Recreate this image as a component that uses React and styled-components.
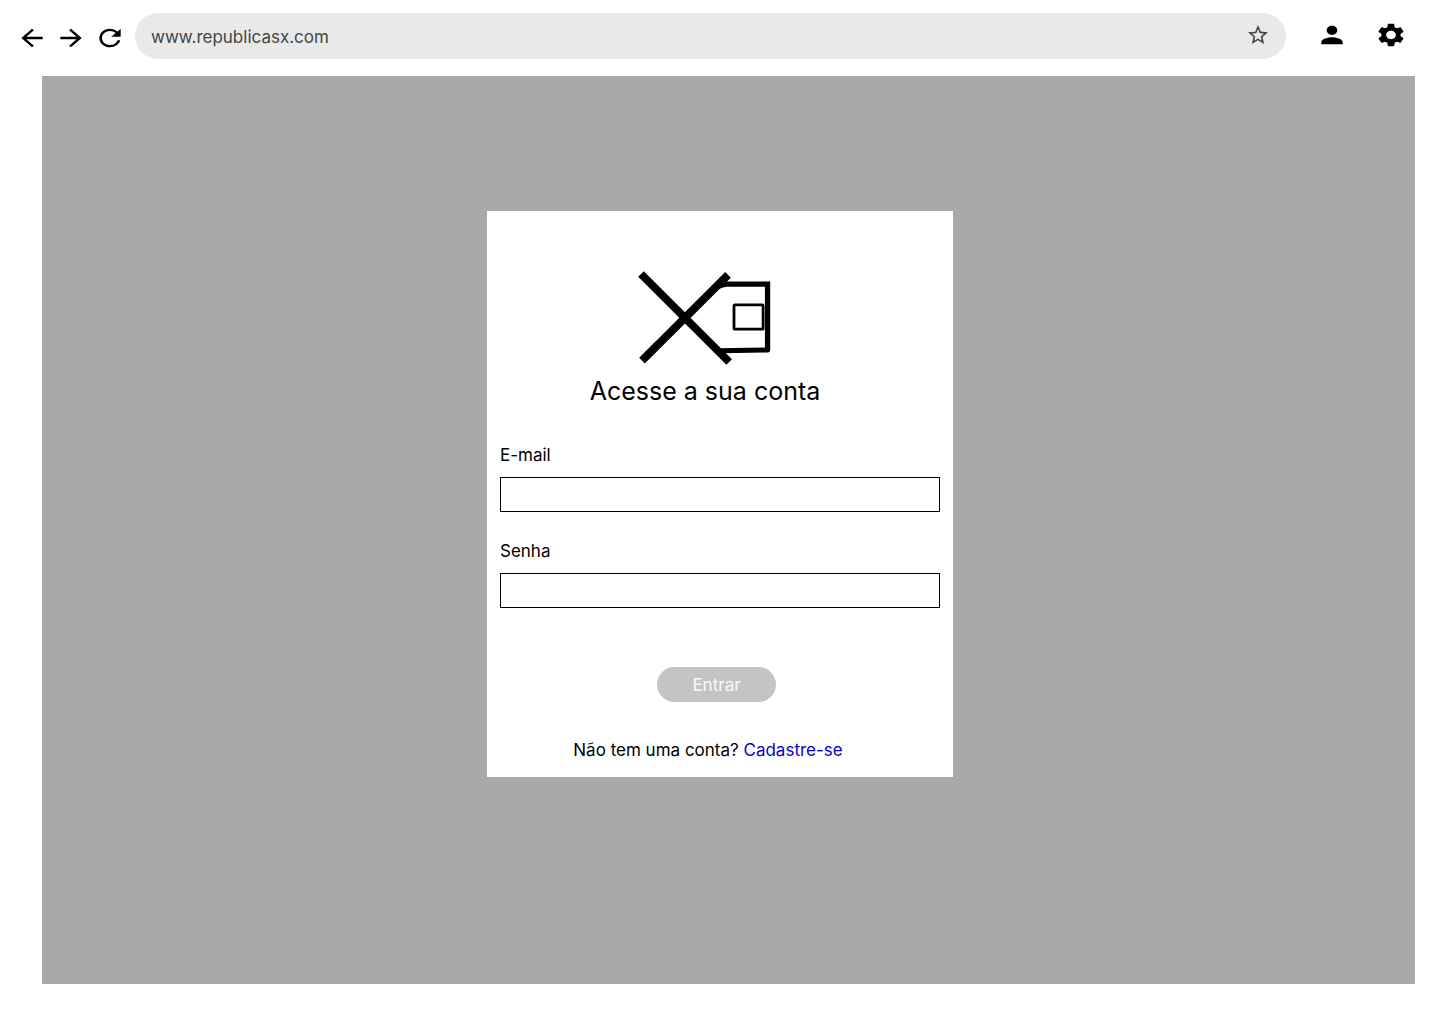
import React, { useState } from "react";
import styled, { createGlobalStyle } from "styled-components";
import {
  MdArrowBack,
  MdArrowForward,
  MdPerson,
  MdRefresh,
  MdSettings,
  MdStarBorder,
} from "react-icons/md";

const GlobalStyle = createGlobalStyle`
  *, *::before, *::after { box-sizing: border-box; }
  body {
    margin: 0;
    background: #fff;
    color: #000;
    font-family: Inter, "Liberation Sans", sans-serif;
    font-size: 17px;
    line-height: 22px;
  }
`;

const Toolbar = styled.header`
  display: flex;
  align-items: center;
  height: 76px;
  padding: 0 33px 4px 16px;
`;

const ButtonGroup = styled.div`
  display: flex;
  gap: ${(p) => p.$gap}px;
  padding: ${(p) => p.$drop || 0}px 0 ${(p) => p.$lift || 0}px;
`;

const IconButton = styled.button`
  display: flex;
  padding: 0;
  border: 0;
  background: none;
  color: ${(p) => p.$color || "#000"};
  cursor: pointer;

  svg {
    width: ${(p) => p.$width || 32}px;
    height: ${(p) => p.$height || 28}px;
  }
`;

const AddressBar = styled.div`
  display: flex;
  flex: 1;
  align-items: center;
  height: 46px;
  margin: 0 30px 0 9px;
  padding: 0 16px 2px;
  border-radius: 23px;
  background: #e9e9e9;
`;

const AddressInput = styled.input`
  flex: 1;
  min-width: 0;
  padding: 4px 0 0;
  border: 0;
  outline: 0;
  background: none;
  color: #444;
  font: inherit;
`;

const Page = styled.main`
  display: flex;
  align-items: flex-start;
  justify-content: center;
  min-height: calc(100vh - 116px);
  margin: 0 25px 40px 42px;
  padding: 135px 17px 40px 0;
  background: #a9a9a9;
`;

const Card = styled.section`
  width: 100%;
  max-width: 466px;
  padding: 60px 13px 16px;
  background: #fff;
`;

const Brand = styled.div`
  display: flex;
  flex-direction: column;
  align-items: center;
  gap: 10px;
  padding-right: 30px;
`;

const Title = styled.h1`
  margin: 0;
  font-size: 25px;
  font-weight: 400;
  line-height: 32px;
`;

const Form = styled.form`
  display: flex;
  flex-direction: column;
  gap: 28px;
  margin-top: 37px;
`;

const Field = styled.div`
  display: flex;
  flex-direction: column;
  gap: 11px;
`;

const TextInput = styled.input`
  width: 100%;
  height: 35px;
  padding: 0 8px;
  border: 1px solid #000;
  border-radius: 0;
  background: #fff;
  font: inherit;
`;

const Actions = styled.div`
  display: flex;
  justify-content: center;
  padding: 31px 7px 0 0;
`;

const SubmitButton = styled.button`
  width: 119px;
  height: 35px;
  padding: 0;
  border: 0;
  border-radius: 18px;
  background: #c4c4c4;
  color: #fff8f8;
  font: inherit;
  cursor: pointer;
`;

const SignUp = styled.p`
  margin: 37px 0 0;
  padding-right: 24px;
  text-align: center;
`;

const SignUpLink = styled.a`
  color: #0500d0;
  text-decoration: none;
`;

const LogoImage = styled.svg`
  overflow: visible;
`;

function Logo() {
  return (
    <LogoImage width="132" height="94" viewBox="0 0 132 94" role="img" aria-label="República SX">
      <g fill="none" stroke="#000">
        <path d="M2 3 90.200 91" strokeWidth="8" />
        <path d="M3 89.700 89 3.800" strokeWidth="8" />
        <path
          d="M95.9 33.9H123.4Q124.1 33.9 124.1 34.6V57.4Q124.1 58.2 123.4 58.2H95.9Q95 58.2 95 57.4V34.6Q95 33.9 95.9 33.9Z"
          strokeWidth="2.8"
        />
      </g>
      <path d="M72 24Q80 16 88 15.700H125.900V76.600L80 77.200 84 82.300 129 81.400Q131.200 81.200 131.200 79V10.400H86Z" />
    </LogoImage>
  );
}

function TextField({ id, label, type, value, onChange }) {
  return (
    <Field>
      <label htmlFor={id}>{label}</label>
      <TextInput id={id} type={type} value={value} onChange={(e) => onChange(e.target.value)} />
    </Field>
  );
}

export default function App() {
  const [address, setAddress] = useState("www.republicasx.com");
  const [email, setEmail] = useState("");
  const [password, setPassword] = useState("");

  return (
    <>
      <GlobalStyle />
      <Toolbar>
        <ButtonGroup $gap={7} $drop={3}>
          <IconButton type="button" aria-label="Voltar">
            <MdArrowBack preserveAspectRatio="none" />
          </IconButton>
          <IconButton type="button" aria-label="Avançar">
            <MdArrowForward preserveAspectRatio="none" />
          </IconButton>
          <IconButton type="button" aria-label="Recarregar">
            <MdRefresh preserveAspectRatio="none" />
          </IconButton>
        </ButtonGroup>
        <AddressBar>
          <AddressInput
            aria-label="Endereço"
            value={address}
            onChange={(e) => setAddress(e.target.value)}
          />
          <IconButton type="button" aria-label="Favoritar" $color="#444" $width={24} $height={24}>
            <MdStarBorder preserveAspectRatio="none" />
          </IconButton>
        </AddressBar>
        <ButtonGroup $gap={27} $lift={2}>
          <IconButton type="button" aria-label="Perfil">
            <MdPerson preserveAspectRatio="none" />
          </IconButton>
          <IconButton type="button" aria-label="Configurações">
            <MdSettings preserveAspectRatio="none" />
          </IconButton>
        </ButtonGroup>
      </Toolbar>
      <Page>
        <Card>
          <Brand>
            <Logo />
            <Title>Acesse a sua conta</Title>
          </Brand>
          <Form onSubmit={(e) => e.preventDefault()}>
            <TextField id="email" label="E-mail" type="email" value={email} onChange={setEmail} />
            <TextField
              id="senha"
              label="Senha"
              type="password"
              value={password}
              onChange={setPassword}
            />
            <Actions>
              <SubmitButton type="submit">Entrar</SubmitButton>
            </Actions>
          </Form>
          <SignUp>
            Não tem uma conta? <SignUpLink href="#cadastro">Cadastre-se</SignUpLink>
          </SignUp>
        </Card>
      </Page>
    </>
  );
}
